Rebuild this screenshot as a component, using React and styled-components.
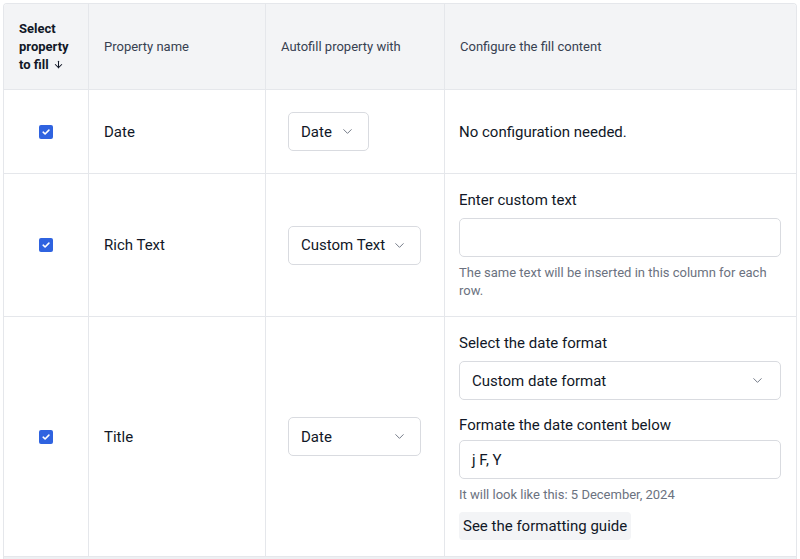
import React from "react";
import styled, { createGlobalStyle } from "styled-components";
import { ChevronDown, ArrowDown } from "lucide-react";

const GlobalStyle = createGlobalStyle`
  * { box-sizing: border-box; }
  body {
    margin: 0;
    padding: 3px 3px 0;
    background: #ffffff;
    font-family: Roboto, "Liberation Sans", sans-serif;
    color: #111827;
  }
`;

const rows = [
  { name: "Date", fill: "Date", selectWidth: 81, padY: 22, kind: "none" },
  { name: "Rich Text", fill: "Custom Text", selectWidth: 133, padY: 16, kind: "text" },
  { name: "Title", fill: "Date", selectWidth: 133, padY: 16, kind: "date" },
];

const Checkbox = () => (
  <Box>
    <svg width="10" height="10" viewBox="0 0 10 10">
      <path d="M2.2 5.2 L4.1 7 L7.9 3.1" fill="none" stroke="#fff" strokeWidth="1.6" strokeLinecap="round" strokeLinejoin="round" />
    </svg>
  </Box>
);

const Dropdown = ({ value, width, full }) => (
  <SelectBox width={width} full={full}>
    <span>{value}</span>
    <ChevronDown size={15} strokeWidth={1.5} color="#6b7280" />
  </SelectBox>
);

const App = () => {
  return (
    <>
      <GlobalStyle />
      <Table>
        <Row header>
          <HeadCell bold>
            <span>
              Select property to fill
              <Arrow>
                <ArrowDown size={11} strokeWidth={2.2} color="#111827" />
              </Arrow>
            </span>
          </HeadCell>
          <HeadCell>Property name</HeadCell>
          <HeadCell>Autofill property with</HeadCell>
          <HeadCell last>Configure the fill content</HeadCell>
        </Row>
        {rows.map((row, i) => (
          <Row key={i}>
            <Cell center padY={row.padY}>
              <Checkbox />
            </Cell>
            <Cell padY={row.padY}>{row.name}</Cell>
            <Cell padY={row.padY} tight>
              <Dropdown value={row.fill} width={row.selectWidth} />
            </Cell>
            <Cell padY={row.padY} last stack={row.kind !== "none"}>
              {row.kind === "none" && "No configuration needed."}
              {row.kind === "text" && (
                <>
                  <Label>Enter custom text</Label>
                  <TextInput />
                  <Hint>The same text will be inserted in this column for each row.</Hint>
                </>
              )}
              {row.kind === "date" && (
                <>
                  <Label>Select the date format</Label>
                  <Dropdown value="Custom date format" full />
                  <Label spaced>Formate the date content below</Label>
                  <TextInput>j F, Y</TextInput>
                  <Hint>It will look like this: 5 December, 2024</Hint>
                  <GuideButton>See the formatting guide</GuideButton>
                </>
              )}
            </Cell>
          </Row>
        ))}
        <Footer />
      </Table>
    </>
  );
};

export default App;

const Table = styled.div`
  width: 794px;
  border: 1px solid #e5e7eb;
  border-bottom: none;
  border-radius: 4px 4px 0 0;
  overflow: hidden;
`;

const Row = styled.div`
  display: grid;
  grid-template-columns: 85px 177px 179px 1fr;
  background: ${(p) => (p.header ? "#f3f4f6" : "#ffffff")};
  border-bottom: 1px solid #e5e7eb;
  min-height: ${(p) => (p.header ? "86px" : "0")};
`;

const HeadCell = styled.div`
  display: flex;
  align-items: center;
  padding: 15px 12px 15px 15px;
  font-size: 13px;
  line-height: 18px;
  font-weight: ${(p) => (p.bold ? 700 : 400)};
  color: ${(p) => (p.bold ? "#111827" : "#374151")};
  border-right: ${(p) => (p.last ? "none" : "1px solid #e5e7eb")};
`;

const Arrow = styled.span`
  display: inline-flex;
  margin-left: 4px;
  vertical-align: -1px;
`;

const Cell = styled.div`
  display: flex;
  flex-direction: ${(p) => (p.stack ? "column" : "row")};
  align-items: ${(p) => (p.stack ? "stretch" : "center")};
  justify-content: ${(p) => (p.center ? "center" : p.stack ? "center" : "flex-start")};
  padding: ${(p) => p.padY}px ${(p) => (p.last ? "15px" : "16px")} ${(p) => p.padY}px
    ${(p) => (p.tight ? "22px" : p.last ? "14px" : "15px")};
  font-size: 15px;
  line-height: 20px;
  color: #111827;
  border-right: ${(p) => (p.last ? "none" : "1px solid #e5e7eb")};
`;

const Box = styled.span`
  width: 14px;
  height: 14px;
  border-radius: 2px;
  background: #2f63e0;
  display: inline-flex;
  align-items: center;
  justify-content: center;
`;

const SelectBox = styled.div`
  display: flex;
  align-items: center;
  justify-content: space-between;
  width: ${(p) => (p.full ? "100%" : `${p.width}px`)};
  height: 39px;
  padding: 0 ${(p) => (p.full ? "15px" : "13px")} 0 12px;
  border: 1px solid #d9dbe0;
  border-radius: 5px;
  background: #ffffff;
  font-size: 15px;
  color: #111827;
`;

const Label = styled.div`
  font-size: 15px;
  line-height: 20px;
  margin-top: ${(p) => (p.spaced ? "15px" : "0")};
  margin-bottom: ${(p) => (p.spaced ? "5px" : "8px")};
`;

const TextInput = styled.div`
  height: 39px;
  display: flex;
  align-items: center;
  padding: 0 12px;
  border: 1px solid #d9dbe0;
  border-radius: 5px;
  font-size: 15px;
  color: #111827;
`;

const Hint = styled.div`
  margin-top: 7px;
  font-size: 13px;
  line-height: 18px;
  color: #6b7280;
`;

const GuideButton = styled.button`
  align-self: flex-start;
  margin-top: 8px;
  height: 28px;
  padding: 0 4px;
  border: none;
  border-radius: 4px;
  background: #f3f4f6;
  font-family: inherit;
  font-size: 15px;
  color: #111827;
`;

const Footer = styled.div`
  height: 10px;
  background: #eef0f3;
`;
